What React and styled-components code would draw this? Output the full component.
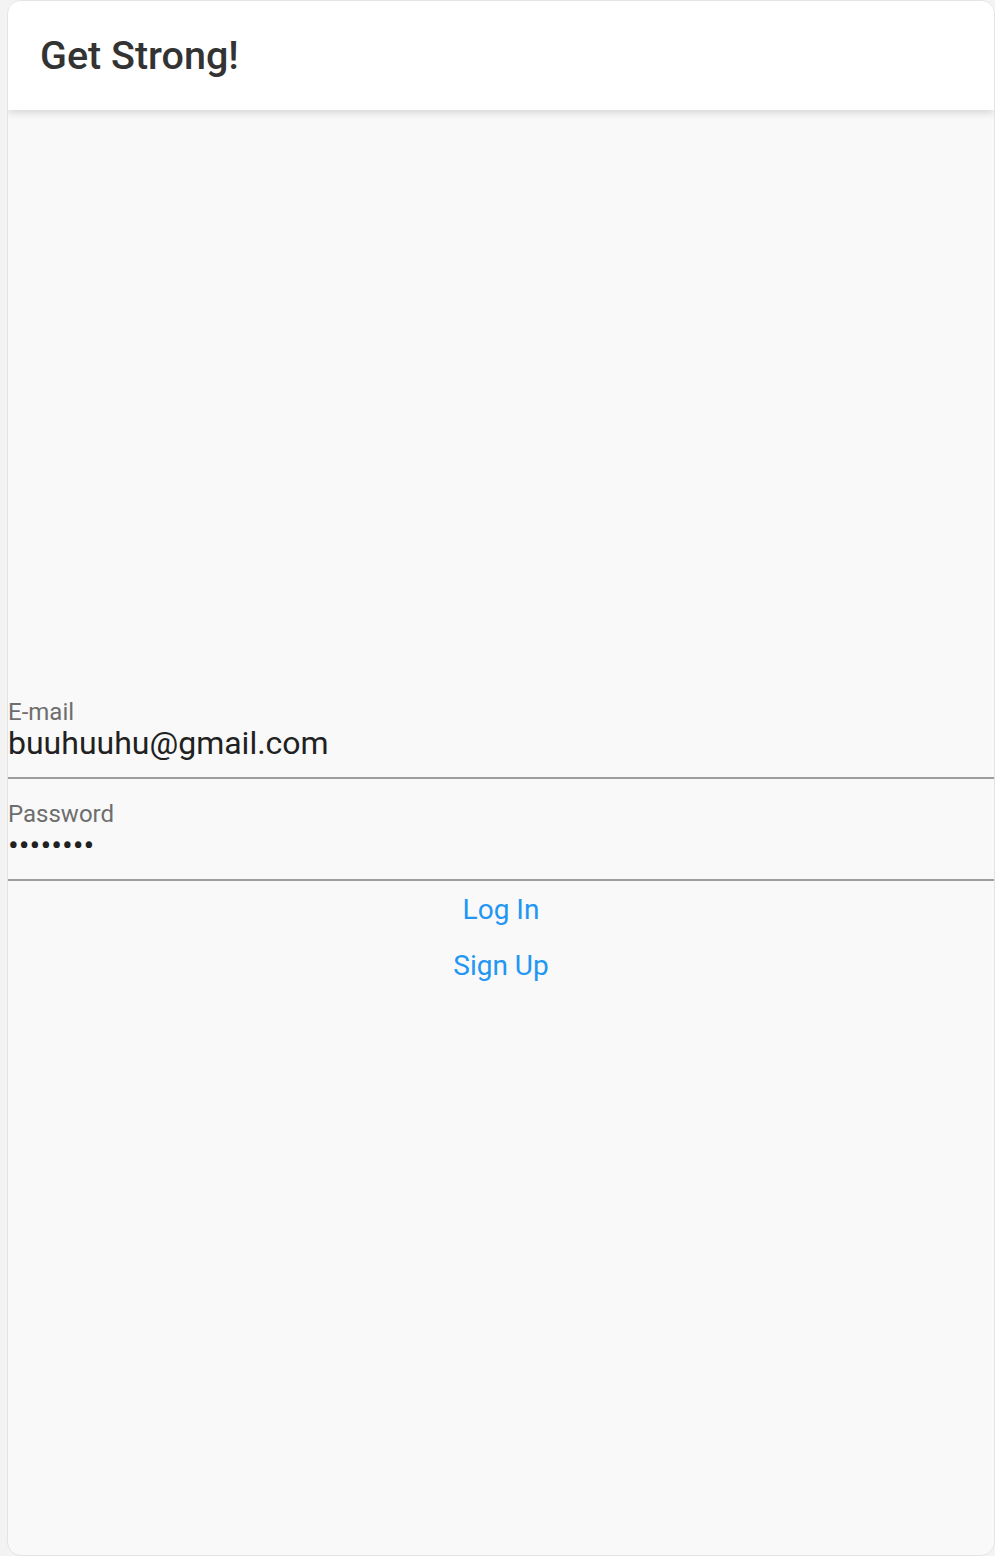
import React from "react";
import styled, { createGlobalStyle } from "styled-components";

const Global = createGlobalStyle`
  html, body { margin: 0; padding: 0; background: #f3f3f3; }
  body { padding-left: 7px; font-family: Roboto, "Noto Sans", sans-serif; }
  * { box-sizing: border-box; }
`;

const Frame = styled.div`
  width: 988px;
  height: 1556px;
  border: 1px solid #e4e4e4;
  border-radius: 14px;
  background: #f9f9f9;
  overflow: hidden;
  display: flex;
  flex-direction: column;
`;

const Header = styled.header`
  height: 109px;
  flex: none;
  background: #ffffff;
  display: flex;
  align-items: center;
  padding-left: 32px;
  box-shadow: 0 3px 8px rgba(0, 0, 0, 0.14);
  position: relative;
  z-index: 1;
`;

const Title = styled.h1`
  margin: 0;
  font-family: Roboto, sans-serif;
  font-weight: 500;
  font-size: 39.5px;
  line-height: 48px;
  color: #333333;
`;

const Content = styled.main`
  flex: 1;
  padding-top: 589px;
  display: flex;
  flex-direction: column;
`;

const Field = styled.label`
  display: flex;
  flex-direction: column;
  padding-top: ${(p) => (p.$first ? "0" : "22px")};
  border-bottom: 2px solid #9e9e9e;
`;

const Label = styled.span`
  font-size: 24px;
  line-height: 26px;
  color: #6e6e6e;
`;

const Input = styled.input`
  border: none;
  outline: none;
  background: transparent;
  padding: 0;
  margin: 0 0 15px 0;
  height: 37px;
  font-family: Roboto, sans-serif;
  font-size: 32px;
  line-height: 37px;
  color: #212121;
  width: 100%;
`;

const Button = styled.button`
  height: 56px;
  border: none;
  background: transparent;
  padding: 0;
  font-family: Roboto, sans-serif;
  font-size: 28px;
  color: #2196f3;
  cursor: pointer;
  width: 100%;
`;

export default function App() {
  return (
    <>
      <Global />
      <Frame>
        <Header>
          <Title>Get Strong!</Title>
        </Header>
        <Content>
          <Field $first>
            <Label>E-mail</Label>
            <Input type="email" defaultValue="buuhuuhu@gmail.com" />
          </Field>
          <Field>
            <Label>Password</Label>
            <Input type="password" defaultValue="password" />
          </Field>
          <Button>Log In</Button>
          <Button>Sign Up</Button>
        </Content>
      </Frame>
    </>
  );
}
